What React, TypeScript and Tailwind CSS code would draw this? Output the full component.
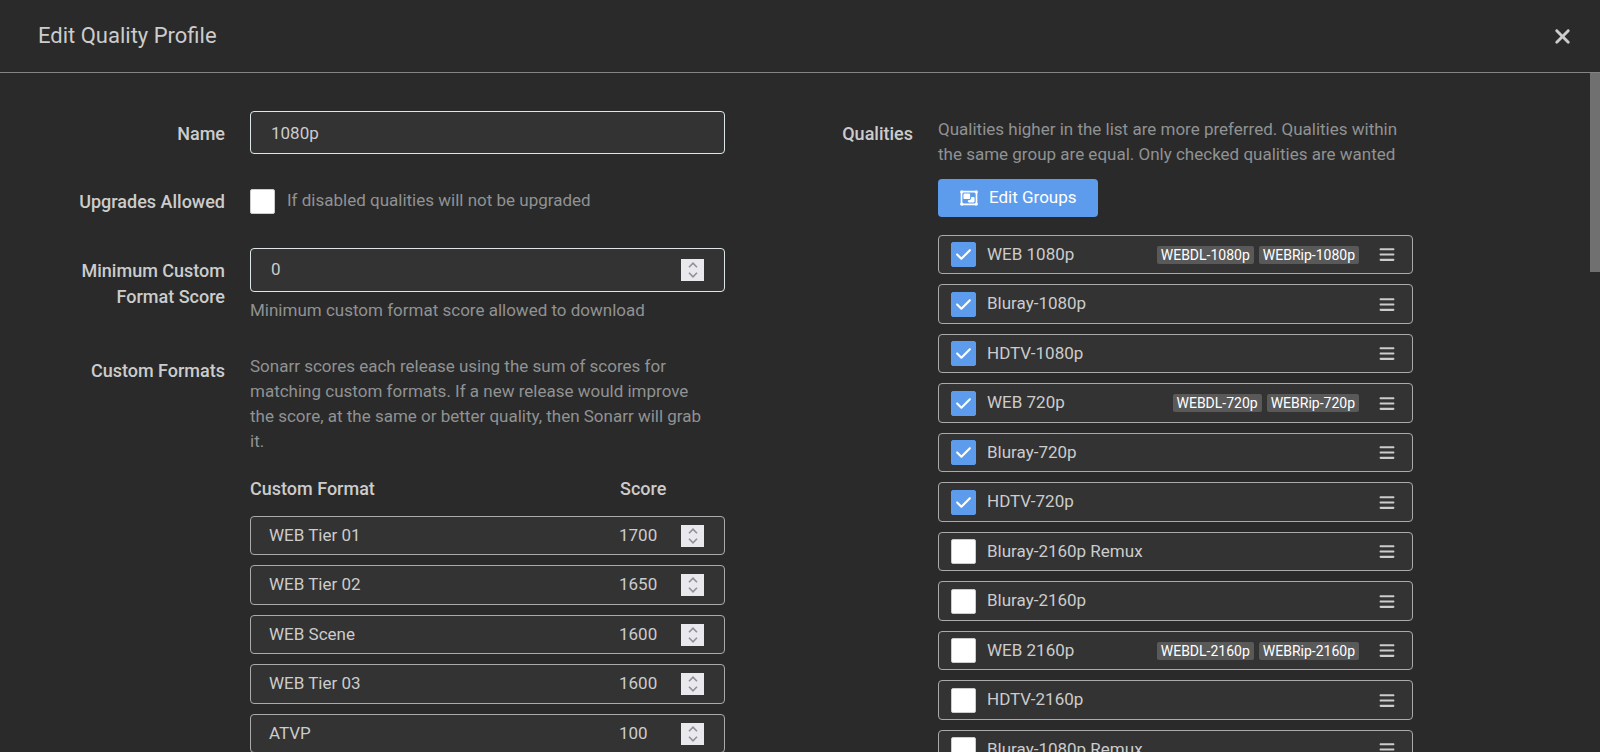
import { useId, useState, type ReactNode } from "react";
import { FaBars, FaCheck, FaRegObjectGroup, FaXmark } from "react-icons/fa6";

type Quality = { name: string; allowed: boolean; members?: string[] };

const initialFormats = [
  { name: "WEB Tier 01", score: 1700 },
  { name: "WEB Tier 02", score: 1650 },
  { name: "WEB Scene", score: 1600 },
  { name: "WEB Tier 03", score: 1600 },
  { name: "ATVP", score: 100 },
];

const initialQualities: Quality[] = [
  { name: "WEB 1080p", allowed: true, members: ["WEBDL-1080p", "WEBRip-1080p"] },
  { name: "Bluray-1080p", allowed: true },
  { name: "HDTV-1080p", allowed: true },
  { name: "WEB 720p", allowed: true, members: ["WEBDL-720p", "WEBRip-720p"] },
  { name: "Bluray-720p", allowed: true },
  { name: "HDTV-720p", allowed: true },
  { name: "Bluray-2160p Remux", allowed: false },
  { name: "Bluray-2160p", allowed: false },
  { name: "WEB 2160p", allowed: false, members: ["WEBDL-2160p", "WEBRip-2160p"] },
  { name: "HDTV-2160p", allowed: false },
  { name: "Bluray-1080p Remux", allowed: false },
];

function Checkbox({ id, checked, onChange }: { id: string; checked: boolean; onChange: (v: boolean) => void }) {
  return (
    <span className="relative grid size-[25px] shrink-0 place-items-center">
      <input
        id={id}
        type="checkbox"
        checked={checked}
        onChange={(e) => onChange(e.target.checked)}
        className="peer size-full appearance-none rounded-xs border border-[#cccccc] bg-white checked:border-[#5d9cec] checked:bg-[#5d9cec]"
      />
      <FaCheck className="pointer-events-none absolute hidden size-[17px] text-white peer-checked:block" />
    </span>
  );
}

function Spinner({ onStep }: { onStep: (delta: number) => void }) {
  return (
    <span className="flex h-[22px] w-[23px] shrink-0 flex-col bg-[#e9e9ed] py-px text-[#8f8f9d]">
      <button type="button" aria-label="Increase" onClick={() => onStep(1)} className="grid flex-1 place-items-center">
        <svg viewBox="0 0 10 6" className="h-[6px] w-[10px]" fill="none" stroke="currentColor" strokeWidth="1.6">
          <path d="M1 5.2 5 1.2l4 4" />
        </svg>
      </button>
      <button type="button" aria-label="Decrease" onClick={() => onStep(-1)} className="grid flex-1 place-items-center">
        <svg viewBox="0 0 10 6" className="h-[6px] w-[10px]" fill="none" stroke="currentColor" strokeWidth="1.6">
          <path d="m1 .8 4 4 4-4" />
        </svg>
      </button>
    </span>
  );
}

function NumberField({ id, value, onChange }: { id: string; value: number; onChange: (v: number) => void }) {
  return (
    <>
      <input
        id={id}
        type="number"
        value={value}
        onChange={(e) => onChange(Number(e.target.value))}
        className="w-0 min-w-0 flex-1 appearance-none bg-transparent outline-none [-moz-appearance:textfield] [&::-webkit-inner-spin-button]:appearance-none"
      />
      <Spinner onStep={(d) => onChange(value + d)} />
    </>
  );
}

function FormGroup({ label, htmlFor, children }: { label: string; htmlFor?: string; children: ReactNode }) {
  const labelClass = "w-[187px] shrink-0 pt-[10px] pl-4 text-right text-lg leading-[26px] font-medium";
  return (
    <div className="flex gap-[25px]">
      {htmlFor ? (
        <label htmlFor={htmlFor} className={labelClass}>
          {label}
        </label>
      ) : (
        <div className={labelClass}>{label}</div>
      )}
      <div className="min-w-0 flex-1">{children}</div>
    </div>
  );
}

function HelpText({ children }: { children: ReactNode }) {
  return <p className="mt-[6px] pr-3 leading-[25px] text-[#909293]">{children}</p>;
}

export default function App() {
  const uid = useId();
  const [name, setName] = useState("1080p");
  const [upgrades, setUpgrades] = useState(false);
  const [minScore, setMinScore] = useState(0);
  const [formats, setFormats] = useState(initialFormats);
  const [qualities, setQualities] = useState(initialQualities);

  return (
    <div className="flex h-screen flex-col overflow-hidden bg-[#2a2a2a] font-[Roboto,sans-serif] text-[17px] text-[#cccccc]">
      <header className="flex shrink-0 items-center justify-between border-b border-[#858585] pr-[26px] pl-[38px]">
        <h1 className="py-5 text-[22px] leading-8">Edit Quality Profile</h1>
        <button type="button" aria-label="Close">
          <FaXmark className="size-[23px]" />
        </button>
      </header>

      <div className="flex min-h-0 flex-1">
        <main className="flex min-w-0 flex-1 gap-px overflow-hidden py-[38px] pl-[38px]">
          <section className="flex max-w-[687px] flex-1 flex-col gap-[25px]">
            <FormGroup label="Name" htmlFor={`${uid}-name`}>
              <input
                id={`${uid}-name`}
                type="text"
                value={name}
                onChange={(e) => setName(e.target.value)}
                className="h-[43px] w-full rounded border border-[#dde6e9] bg-[#333333] px-5 outline-none"
              />
            </FormGroup>

            <FormGroup label="Upgrades Allowed" htmlFor={`${uid}-upgrades`}>
              <div className="flex h-11 items-center gap-3">
                <Checkbox id={`${uid}-upgrades`} checked={upgrades} onChange={setUpgrades} />
                <span className="text-[#909293]">If disabled qualities will not be upgraded</span>
              </div>
            </FormGroup>

            <FormGroup label="Minimum Custom Format Score" htmlFor={`${uid}-min`}>
              <div className="flex h-11 items-center rounded border border-[#dde6e9] bg-[#333333] px-5">
                <NumberField id={`${uid}-min`} value={minScore} onChange={setMinScore} />
              </div>
              <HelpText>Minimum custom format score allowed to download</HelpText>
            </FormGroup>

            <FormGroup label="Custom Formats">
              <HelpText>
                Sonarr scores each release using the sum of scores for matching custom formats. If a new release would
                improve the score, at the same or better quality, then Sonarr will grab it.
              </HelpText>
              <div className="mt-[22px] flex justify-between text-lg leading-[26px] font-medium">
                <span>Custom Format</span>
                <span className="w-[105px]">Score</span>
              </div>
              <ul className="mt-[14px] flex flex-col gap-[10px]">
                {formats.map((format, i) => (
                  <li
                    key={format.name}
                    className="flex items-center rounded border border-[#aaaaaa] bg-[#333333] pr-5 pl-[18px] odd:h-[39px] even:h-10"
                  >
                    <label htmlFor={`${uid}-f${i}`} className="flex-1">
                      {format.name}
                    </label>
                    <span className="flex w-[85px] items-center">
                      <NumberField
                        id={`${uid}-f${i}`}
                        value={format.score}
                        onChange={(score) => setFormats(formats.map((f, j) => (j === i ? { ...f, score } : f)))}
                      />
                    </span>
                  </li>
                ))}
              </ul>
            </FormGroup>
          </section>

          <section className="max-w-[687px] flex-1">
            <FormGroup label="Qualities">
              <HelpText>
                Qualities higher in the list are more preferred. Qualities within the same group are equal. Only checked
                qualities are wanted
              </HelpText>
              <button
                type="button"
                className="mt-3 flex h-[38px] items-center gap-[10px] rounded bg-[#5d9cec] px-[21px] text-white"
              >
                <FaRegObjectGroup className="h-[18px] w-5" />
                Edit Groups
              </button>
              <ul className="mt-[18px] flex flex-col gap-[10px]">
                {qualities.map((quality, i) => (
                  <li
                    key={quality.name}
                    className="flex items-center rounded border border-[#aaaaaa] bg-[#333333] pr-[17px] pl-3 odd:h-[39px] even:h-10"
                  >
                    <Checkbox
                      id={`${uid}-q${i}`}
                      checked={quality.allowed}
                      onChange={(allowed) =>
                        setQualities(qualities.map((q, j) => (j === i ? { ...q, allowed } : q)))
                      }
                    />
                    <label htmlFor={`${uid}-q${i}`} className="flex-1 pl-[11px]">
                      {quality.name}
                    </label>
                    {quality.members && (
                      <span className="mr-5 flex gap-[5px] text-sm leading-[18px] text-white">
                        {quality.members.map((member) => (
                          <span key={member} className="rounded-xs bg-[#595959] px-1">
                            {member}
                          </span>
                        ))}
                      </span>
                    )}
                    <button type="button" aria-label={`Move ${quality.name}`} className="cursor-grab">
                      <FaBars className="h-[17px] w-4" />
                    </button>
                  </li>
                ))}
              </ul>
            </FormGroup>
          </section>
        </main>

        <div className="w-[10px] shrink-0">
          <div className="h-[199px] bg-[#707070]" />
        </div>
      </div>
    </div>
  );
}
